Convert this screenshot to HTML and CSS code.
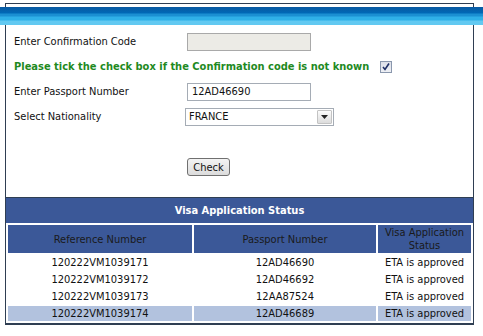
FILE: index.html
```html
<!DOCTYPE html>
<html lang="en">
<head>
    <meta charset="UTF-8">
    <title>Visa Application Status</title>
    <link rel="stylesheet" href="styles.css">
</head>
<body>
    <div class="page">
        <div class="frame">
            <div class="band"></div>

            <form class="lookup" onsubmit="return false">
                <div class="row">
                    <label class="label" for="confCode">Enter Confirmation Code</label>
                    <input type="text" id="confCode" class="field field-off" disabled>
                </div>
                <div class="row notice">
                    <span>Please tick the check box if the Confirmation code is not known</span>
                    <span class="tick">
                        <svg width="8" height="8" viewBox="0 0 8 8"><path d="M1 4 L3 6.5 L7 0.5" fill="none" stroke="#1f2f66" stroke-width="1.6"/></svg>
                    </span>
                </div>
                <div class="row">
                    <label class="label" for="passport">Enter Passport Number</label>
                    <input type="text" id="passport" class="field" value="12AD46690">
                </div>
                <div class="row">
                    <label class="label">Select Nationality</label>
                    <div class="select">
                        <span class="select-value">FRANCE</span>
                        <span class="drop">
                            <svg width="7" height="4" viewBox="0 0 7 4"><path d="M0 0 H7 L3.5 4 Z" fill="#222"/></svg>
                        </span>
                    </div>
                </div>
                <div class="actions">
                    <button type="submit" class="check-btn">Check</button>
                </div>
            </form>

            <div class="status">
                <div class="status-title">Visa Application Status</div>
                <table class="status-table">
                    <tr>
                        <th class="col-ref">Reference Number</th>
                        <th class="col-pass">Passport Number</th>
                        <th class="col-state">Visa Application<br>Status</th>
                    </tr>
                    <tr>
                        <td>120222VM1039171</td>
                        <td>12AD46690</td>
                        <td>ETA is approved</td>
                    </tr>
                    <tr>
                        <td>120222VM1039172</td>
                        <td>12AD46692</td>
                        <td>ETA is approved</td>
                    </tr>
                    <tr>
                        <td>120222VM1039173</td>
                        <td>12AA87524</td>
                        <td>ETA is approved</td>
                    </tr>
                    <tr class="current">
                        <td>120222VM1039174</td>
                        <td>12AD46689</td>
                        <td>ETA is approved</td>
                    </tr>
                </table>
            </div>
        </div>
    </div>
</body>
</html>
```

FILE: styles.css
```css
body {
    margin: 0;
    background: #fff;
    color: #111;
    font-family: "DejaVu Sans Condensed", "Liberation Sans", sans-serif;
    font-size: 11px;
}
.page {
    padding-top: 3px;
}
.frame {
    box-sizing: border-box;
    width: 469px;
    margin-left: 5px;
    border: 1px solid #2f3e52;
    border-bottom-width: 0;
}
.band {
    height: 18px;
    margin: 3px -10px 0 -6px;
    background: linear-gradient(to bottom,
        #0a5aa2 0px, #0068b6 6px,
        #1b8fd2 7px, #1b8fd2 9px,
        #2fb0e8 10px, #2fb0e8 13px,
        #62c9f1 14px, #62c9f1 18px);
}
.lookup {
    padding: 4px 0 0 8px;
}
.row {
    display: flex;
    align-items: center;
    height: 25px;
}
.label {
    width: 173px;
}
.field {
    box-sizing: border-box;
    width: 124px;
    height: 18px;
    margin: 0;
    padding: 0 4px;
    border: 1px solid #a5acb5;
    background: #fff;
    font-family: inherit;
    font-size: 11px;
    color: #111;
}
.field-off {
    background: #ecebe6;
    border-color: #a9a9a9;
}
.notice {
    color: #1f8a1f;
    font-weight: bold;
}
.tick {
    box-sizing: border-box;
    width: 12px;
    height: 12px;
    margin-left: 11px;
    border: 1px solid #8a97ad;
    background: linear-gradient(#dcdfe8, #eef0f5);
    display: flex;
    align-items: center;
    justify-content: center;
}
.select {
    box-sizing: border-box;
    width: 149px;
    height: 18px;
    margin-left: -2px;
    border: 1px solid #a5acb5;
    display: flex;
    align-items: center;
    justify-content: space-between;
    padding: 0 1px 0 3px;
}
.drop {
    box-sizing: border-box;
    width: 15px;
    height: 14px;
    border: 1px solid #c3c3c3;
    border-radius: 1px;
    background: linear-gradient(#fbfbfb, #dcdcdc);
    display: flex;
    align-items: center;
    justify-content: center;
}
.actions {
    padding: 29px 0 0 173px;
    height: 17px;
}
.check-btn {
    box-sizing: border-box;
    width: 43px;
    height: 18px;
    margin: 0;
    padding: 0;
    border: 1px solid #707070;
    border-radius: 3px;
    background: linear-gradient(#f4f4f4, #dcdcdc);
    font-family: inherit;
    font-size: 11px;
    color: #111;
}
.status {
    margin-top: 22px;
    border: 1px solid #2f3e52;
    border-bottom-width: 2px;
    margin-left: -1px;
    margin-right: -1px;
    padding: 0;
    background: #fff;
}
.status-title {
    height: 25px;
    line-height: 25px;
    background: #3b5898;
    color: #fff;
    font-weight: bold;
    text-align: center;
}
.status-table {
    width: 100%;
    border-spacing: 2px;
    font-size: 11px;
}
.status-table th {
    height: 28px;
    padding: 0;
    background: #3b5898;
    color: #1a1a1a;
    font-weight: normal;
    line-height: 13px;
}
.status-table td {
    height: 15px;
    padding: 0;
    text-align: center;
    line-height: 15px;
    color: #111;
}
.col-ref {
    width: 184px;
}
.col-pass {
    width: 182px;
}
.current td {
    background: #b2c2de;
}
```
